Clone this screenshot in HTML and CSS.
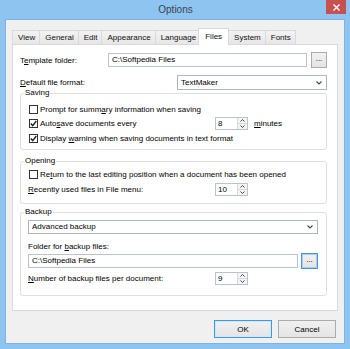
FILE: index.html
```html
<!DOCTYPE html>
<html lang="en">
<head>
    <meta charset="UTF-8">
    <title>Options</title>
    <link rel="stylesheet" href="styles.css">
</head>
<body>
    <div class="window">
        <div class="titlebar">
            <span></span>
            <span class="title">Options</span>
            <span class="close">
                <svg width="7" height="7" viewBox="0 0 7 7"><path d="M0.5 0.5 L6.5 6.5 M6.5 0.5 L0.5 6.5" stroke="#fff" stroke-width="1.4"/></svg>
            </span>
        </div>

        <div class="dialog">
            <div class="tabs">
                <span class="tab">View</span>
                <span class="tab">General</span>
                <span class="tab">Edit</span>
                <span class="tab">Appearance</span>
                <span class="tab">Language</span>
                <span class="tab active">Files</span>
                <span class="tab">System</span>
                <span class="tab">Fonts</span>
            </div>

            <div class="panel">
                <div class="row row-first">
                    <span class="label label-template">T<u>e</u>mplate folder:</span>
                    <span class="textbox textbox-template">C:\Softpedia Files</span>
                    <span class="browse">...</span>
                </div>
                <div class="row row-format">
                    <span class="label label-format"><u>D</u>efault file format:</span>
                    <span class="combo combo-format">
                        <span>TextMaker</span>
                        <svg class="chevron" width="6" height="4" viewBox="0 0 6 4"><path d="M0.5 0.5 L3 3 L5.5 0.5" stroke="#444" fill="none" stroke-width="1.1"/></svg>
                    </span>
                </div>

                <!-- Saving -->
                <fieldset class="group group-saving">
                    <legend>Saving</legend>
                    <div class="row check-row">
                        <span class="check"></span>
                        <span>Prompt for summ<u>a</u>ry information when saving</span>
                    </div>
                    <div class="row check-row spin-row">
                        <span class="check checked">
                            <svg width="7" height="7" viewBox="0 0 7 7"><path d="M0.8 3.6 L2.7 5.6 L6.3 1" stroke="#222" fill="none" stroke-width="1.4"/></svg>
                        </span>
                        <span class="label label-autosave">Auto<u>s</u>ave documents every</span>
                        <span class="spin">
                            <span class="spin-value">8</span>
                            <span class="spin-buttons">
                                <span class="spin-btn"><svg width="5" height="3" viewBox="0 0 5 3"><path d="M0.5 2.5 L2.5 0.5 L4.5 2.5" stroke="#444" fill="none"/></svg></span>
                                <span class="spin-btn"><svg width="5" height="3" viewBox="0 0 5 3"><path d="M0.5 0.5 L2.5 2.5 L4.5 0.5" stroke="#444" fill="none"/></svg></span>
                            </span>
                        </span>
                        <span class="unit"><u>m</u>inutes</span>
                    </div>
                    <div class="row check-row">
                        <span class="check checked">
                            <svg width="7" height="7" viewBox="0 0 7 7"><path d="M0.8 3.6 L2.7 5.6 L6.3 1" stroke="#222" fill="none" stroke-width="1.4"/></svg>
                        </span>
                        <span>Display <u>w</u>arning when saving documents in text format</span>
                    </div>
                </fieldset>

                <!-- Opening -->
                <fieldset class="group group-opening">
                    <legend>Opening</legend>
                    <div class="row check-row">
                        <span class="check"></span>
                        <span>Re<u>t</u>urn to the last editing position when a document has been opened</span>
                    </div>
                    <div class="row spin-row recent-row">
                        <span class="label label-long"><u>R</u>ecently used files in File menu:</span>
                        <span class="spin">
                            <span class="spin-value">10</span>
                            <span class="spin-buttons">
                                <span class="spin-btn"><svg width="5" height="3" viewBox="0 0 5 3"><path d="M0.5 2.5 L2.5 0.5 L4.5 2.5" stroke="#444" fill="none"/></svg></span>
                                <span class="spin-btn"><svg width="5" height="3" viewBox="0 0 5 3"><path d="M0.5 0.5 L2.5 2.5 L4.5 0.5" stroke="#444" fill="none"/></svg></span>
                            </span>
                        </span>
                    </div>
                </fieldset>

                <!-- Backup -->
                <fieldset class="group group-backup">
                    <legend>Backup</legend>
                    <span class="combo combo-backup">
                        <span>Advanced backup</span>
                        <svg class="chevron" width="6" height="4" viewBox="0 0 6 4"><path d="M0.5 0.5 L3 3 L5.5 0.5" stroke="#444" fill="none" stroke-width="1.1"/></svg>
                    </span>
                    <div class="row folder-label"><span>Folder for <u>b</u>ackup files:</span></div>
                    <div class="row folder-row">
                        <span class="textbox textbox-backup">C:\Softpedia Files</span>
                        <span class="browse focused">...</span>
                    </div>
                    <div class="row spin-row number-row">
                        <span class="label label-long"><u>N</u>umber of backup files per document:</span>
                        <span class="spin">
                            <span class="spin-value">9</span>
                            <span class="spin-buttons">
                                <span class="spin-btn"><svg width="5" height="3" viewBox="0 0 5 3"><path d="M0.5 2.5 L2.5 0.5 L4.5 2.5" stroke="#444" fill="none"/></svg></span>
                                <span class="spin-btn"><svg width="5" height="3" viewBox="0 0 5 3"><path d="M0.5 0.5 L2.5 2.5 L4.5 0.5" stroke="#444" fill="none"/></svg></span>
                            </span>
                        </span>
                    </div>
                </fieldset>
            </div>

            <div class="buttons">
                <button class="btn btn-default">OK</button>
                <button class="btn">Cancel</button>
            </div>
        </div>
    </div>
</body>
</html>
```

FILE: styles.css
```css
html, body {
    margin: 0;
    padding: 0;
}
body {
    font-family: "Liberation Sans", Arial, sans-serif;
    font-size: 8px;
    color: #000;
    background-color: #8ec4f0;
}
.window {
    width: 350px;
    height: 349px;
    box-sizing: border-box;
    padding: 0 5px 5px 5px;
    background-color: #8ec4f0;
}
.titlebar {
    height: 19px;
    display: grid;
    grid-template-columns: 1fr auto 1fr;
    margin: 0 -1px 0 0;
}
.title {
    font-size: 10px;
    line-height: 20px;
    color: #3a4450;
}
.close {
    justify-self: end;
    width: 20px;
    height: 14px;
    background-color: #c75050;
    display: flex;
    align-items: center;
    justify-content: center;
}
.dialog {
    height: 325px;
    box-sizing: border-box;
    border: 1px solid #7db2e4;
    background-color: #f0f0f0;
    padding: 8px 6px 0 6px;
}

/* tabs */
.tabs {
    display: flex;
    align-items: flex-end;
    height: 16px;
}
.tab {
    height: 14px;
    line-height: 14px;
    box-sizing: border-box;
    padding: 0 4px 0 5px;
    border: 1px solid #d9d9d9;
    border-bottom: none;
    margin-right: -1px;
    background: linear-gradient(#f3f3f3, #e6e6e6);
    color: #111;
}
.tab.active {
    line-height: 16px;
    margin: 0 -2px -1px -2px;
    padding: 0 6px;
    background: #fff;
    position: relative;
    z-index: 1;
    height: 17px;
}
.tab.active + .tab {
    margin-left: 1px;
}
.panel {
    height: 267px;
    box-sizing: border-box;
    border: 1px solid #d9d9d9;
    background-color: #fff;
    padding: 7px 10px 0 7px;
}

/* rows */
.row {
    display: flex;
    align-items: center;
}
.row-first {
    height: 16px;
}
.row-format {
    height: 15px;
    margin-top: 7px;
}
.label-template {
    width: 88px;
}
.label-format {
    width: 157px;
}
.label-autosave {
    width: 175px;
}
.label-long {
    width: 187px;
}
.textbox, .combo {
    height: 14px;
    box-sizing: border-box;
    border: 1px solid #b9c3cf;
    background: #fff;
    padding: 0 3px;
    line-height: 12px;
    white-space: nowrap;
}
.textbox-template {
    width: 199px;
}
.textbox-backup {
    width: 270px;
}
.combo {
    display: flex;
    align-items: center;
    justify-content: space-between;
    padding-right: 4px;
}
.combo-format {
    width: 150px;
    height: 15px;
    border-color: #acb6c3;
}
.combo-backup {
    width: 290px;
    margin-top: 3px;
    border-color: #acb6c3;
}
.browse {
    width: 16px;
    height: 16px;
    box-sizing: border-box;
    margin-left: 4px;
    border: 1px solid #acacac;
    background: linear-gradient(#f2f2f2, #e3e3e3);
    text-align: center;
    line-height: 12px;
    font-size: 8px;
}
.browse.focused {
    width: 17px;
    margin-left: 3px;
    border-color: #4f95d6;
    box-shadow: inset 0 0 0 1px #a9cdee;
}

/* group boxes */
.group {
    margin: 0;
    min-width: 0;
    border: 1px solid #dcdfe3;
    border-radius: 3px;
    padding: 0 8px 0 7px;
}
.group legend {
    line-height: 10px;
    padding: 0 1px;
    margin-left: -4px;
}
.group-saving {
    margin-top: -2px;
    padding-top: 4px;
    padding-bottom: 4px;
}
.group-opening {
    margin-top: 6px;
    padding-top: 1px;
    padding-bottom: 6px;
}
.group-backup {
    margin-top: 3px;
    padding-top: 0;
    padding-bottom: 9px;
}
.check-row {
    height: 14px;
    white-space: nowrap;
}
.spin-row {
    height: 15px;
}
.recent-row {
    margin-top: 1px;
}
.check {
    width: 9px;
    height: 9px;
    box-sizing: border-box;
    border: 1px solid #333;
    background: #fff;
    margin: 0 2px 0 1px;
    display: flex;
    align-items: center;
    justify-content: center;
    flex: 0 0 auto;
}
.spin {
    width: 33px;
    height: 13px;
    box-sizing: border-box;
    border: 1px solid #b9c3cf;
    background: #fff;
    display: flex;
}
.spin-value {
    flex: 1;
    padding-left: 2px;
    line-height: 11px;
}
.spin-buttons {
    width: 9px;
    display: flex;
    flex-direction: column;
    border-left: 1px solid #d5d9de;
}
.spin-btn {
    flex: 1;
    display: flex;
    align-items: center;
    justify-content: center;
    background: #f4f4f4;
}
.spin-btn + .spin-btn {
    border-top: 1px solid #d5d9de;
}
.unit {
    margin-left: 6px;
}
.folder-label {
    height: 14px;
    margin-top: 5px;
}
.folder-row {
    height: 16px;
}
.number-row {
    margin-top: 2px;
}

/* buttons */
.buttons {
    display: flex;
    justify-content: flex-end;
    gap: 6px;
    margin-top: 9px;
    padding-right: 2px;
}
.btn {
    width: 58px;
    height: 18px;
    padding: 0;
    font-family: "Liberation Sans", Arial, sans-serif;
    font-size: 8px;
    color: #000;
    border: 1px solid #acacac;
    background: linear-gradient(#f0f0f0, #e5e5e5);
}
.btn-default {
    border-color: #3c9be6;
    box-shadow: inset 0 0 0 1px #cde6fa;
}
```
